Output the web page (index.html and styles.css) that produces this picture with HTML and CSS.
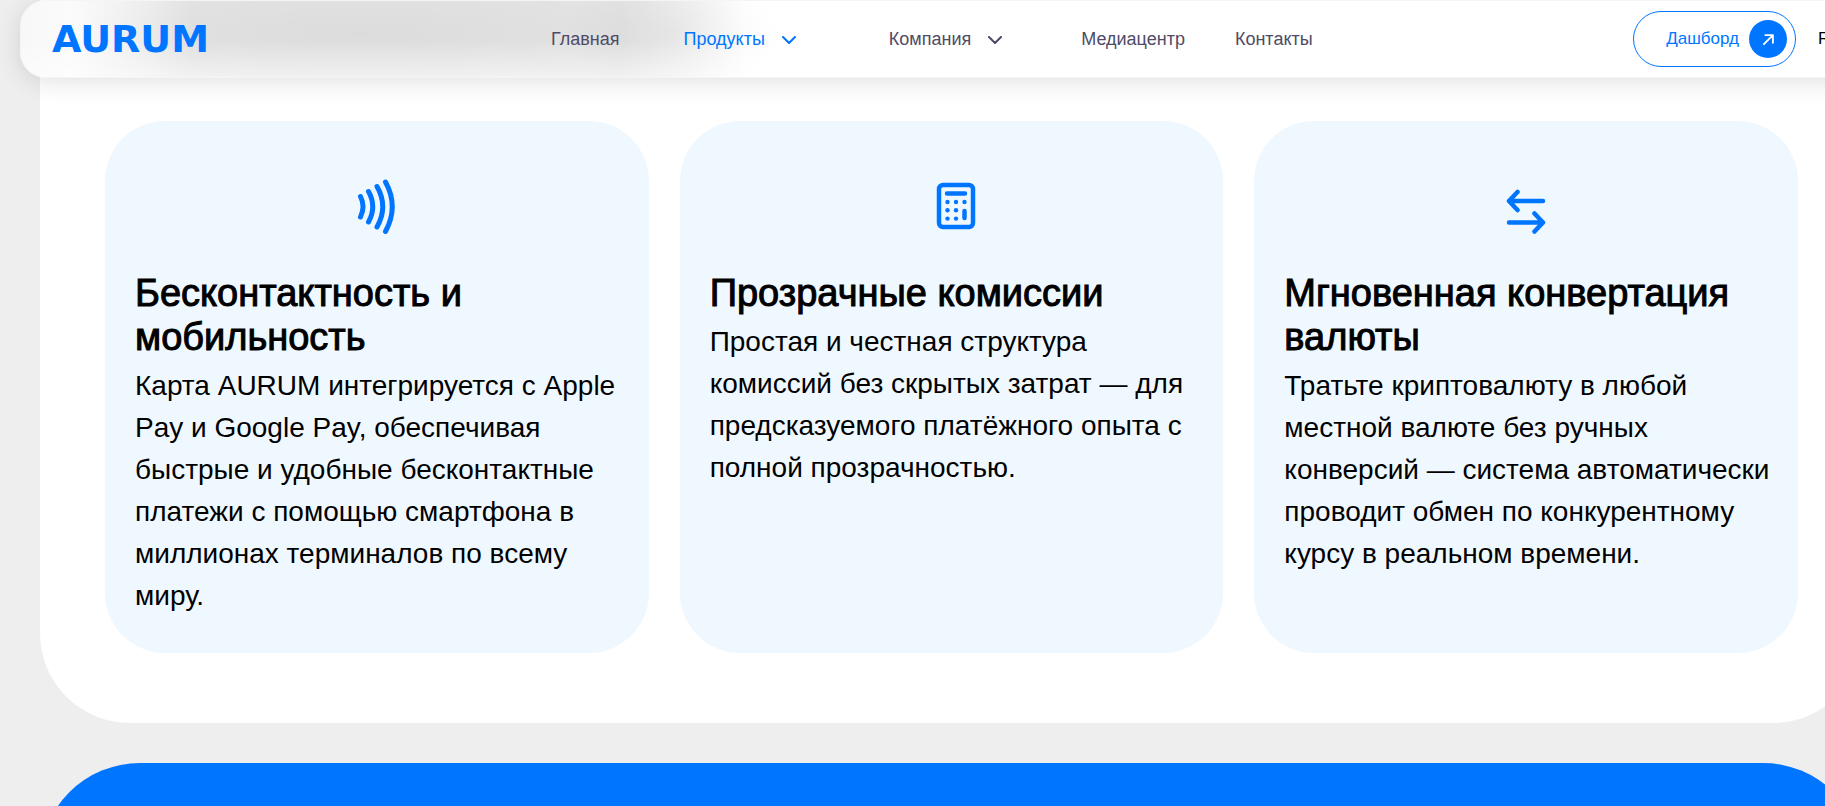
FILE: index.html
```html
<!DOCTYPE html>
<html lang="ru">
<head>
  <meta charset="UTF-8">
  <meta name="viewport" content="width=device-width, initial-scale=1.0">
  <title>AURUM</title>
  <link rel="stylesheet" href="styles.css">
</head>
<body>
  <header class="header">
    <a href="#" class="logo">AURUM</a>
    <nav class="nav">
      <a href="#" class="nav-link">Главная</a>
      <a href="#" class="nav-link has-menu active">Продукты
        <svg class="chevron" viewBox="0 0 14 8"><path d="M1 1l6 6 6-6"/></svg>
      </a>
      <a href="#" class="nav-link has-menu">Компания
        <svg class="chevron" viewBox="0 0 14 8"><path d="M1 1l6 6 6-6"/></svg>
      </a>
      <a href="#" class="nav-link">Медиацентр</a>
      <a href="#" class="nav-link">Контакты</a>
    </nav>
    <div class="header-right">
      <a href="#" class="dashboard">Дашборд
        <span class="dashboard-icon">
          <svg viewBox="0 0 12 12"><path d="M1 11L10.500 1.500M2.500 1.200h8.300v8.300"/></svg>
        </span>
      </a>
      <a href="#" class="lang">RU</a>
    </div>
  </header>

  <main class="page">
    <section class="features">
      <div class="card">
        <svg class="card-icon contactless" viewBox="0 0 60 60">
          <path d="M13.500 20.500q5 10 0 20.500M21.500 15.500q8.500 15 0 30.500M30 10.500q11.500 20 0 40.500M38.500 6q13.500 24.500 0 49.500"/>
        </svg>
        <h3>Бесконтактность и мобильность</h3>
        <p>Карта AURUM интегрируется с Apple Pay и Google Pay, обеспечивая быстрые и удобные бесконтактные платежи с помощью смартфона в миллионах терминалов по всему миру.</p>
      </div>
      <div class="card">
        <svg class="card-icon" viewBox="0 0 60 60">
          <rect x="18" y="9" width="34" height="42" rx="4"/>
          <path d="M26 17.500h18M43.500 35v7"/>
          <g class="dots">
            <circle cx="26.500" cy="26" r="2.200"/>
            <circle cx="35" cy="26" r="2.200"/>
            <circle cx="43.500" cy="26" r="2.200"/>
            <circle cx="26.500" cy="34.300" r="2.200"/>
            <circle cx="35" cy="34.300" r="2.200"/>
            <circle cx="26.500" cy="42.600" r="2.200"/>
            <circle cx="35" cy="42.600" r="2.200"/>
          </g>
        </svg>
        <h3>Прозрачные комиссии</h3>
        <p>Простая и честная структура комиссий без скрытых затрат — для предсказуемого платёжного опыта с полной прозрачностью.</p>
      </div>
      <div class="card">
        <svg class="card-icon" viewBox="0 0 60 60">
          <path d="M47 25H13M21.500 16L13 25l8.500 9M13 46.500h34M38.500 37.500l8.500 9-8.500 9"/>
        </svg>
        <h3>Мгновенная конвертация валюты</h3>
        <p>Тратьте криптовалюту в любой местной валюте без ручных конверсий — система автоматически проводит обмен по конкурентному курсу в реальном времени.</p>
      </div>
    </section>
    <section class="banner"></section>
  </main>
</body>
</html>
```
FILE: styles.css
```css
* {
  box-sizing: border-box;
}
html {
  overflow: hidden;
}
body {
  margin: 0;
  min-width: 1903px;
  background: #eee;
  color: #000;
  font-family: 'Liberation Sans', Arial, sans-serif;
}
a {
  color: inherit;
  text-decoration: none;
}
svg {
  fill: none;
  stroke: currentColor;
  stroke-linecap: round;
  stroke-linejoin: round;
}

/* header */
.header {
  position: sticky;
  top: 0;
  z-index: 10;
  display: flex;
  align-items: center;
  height: 78px;
  margin: 0 20px;
  padding: 0 31px;
  border: 1px solid #f5f5f5;
  border-radius: 26px;
  background:
    linear-gradient(to bottom, transparent 40px, rgba(255,255,255,0.5)),
    radial-gradient(ellipse 110px 60px at 650px 32px, rgba(0,0,0,0.04), transparent),
    radial-gradient(ellipse 300px 50px at 340px 32px, rgba(0,0,0,0.03), transparent),
    linear-gradient(to right, transparent 50px, rgba(0,0,0,0.11) 170px, rgba(0,0,0,0.11) 600px, transparent 725px),
    linear-gradient(to right, #f8f8f8, #fff 130px);
  box-shadow: 0 4px 24px rgba(0,0,0,0.12);
}
.logo {
  width: 164px;
  color: #0075ff;
  font-family: 'DejaVu Sans', sans-serif;
  font-size: 38px;
  font-weight: bold;
  line-height: 40px;
}
.nav {
  display: flex;
  gap: 50px;
  margin-left: 335px;
  color: #4f4b66;
  font-size: 18px;
}
.nav-link {
  display: flex;
  align-items: center;
}
.has-menu {
  gap: 17px;
  padding: 0 29px 0 14px;
}
.active {
  color: #0075ff;
}
.chevron {
  width: 14px;
  height: 8px;
  margin-top: 2px;
  stroke-width: 2;
}
.header-right {
  display: flex;
  align-items: center;
  gap: 22px;
  margin-left: auto;
}
.dashboard {
  display: flex;
  align-items: center;
  gap: 10px;
  height: 56px;
  padding: 0 8px 0 32px;
  border: 1px solid #0075ff;
  border-radius: 28px;
  color: #0075ff;
  font-size: 17px;
}
.dashboard-icon {
  display: flex;
  align-items: center;
  justify-content: center;
  width: 38px;
  height: 38px;
  border-radius: 50%;
  background: #0075ff;
  color: #fff;
}
.dashboard-icon svg {
  width: 11px;
  height: 11px;
  stroke-width: 2;
}
.lang {
  width: 33px;
  font-size: 17px;
}

/* cards */
.page {
  margin: -78px 40px 0;
}
.features {
  display: grid;
  grid-template-columns: repeat(3, 1fr);
  gap: 31px;
  padding: 121px 65px 70px;
  border-radius: 0 0 90px 90px;
  background: #fff;
}
.card {
  padding: 55px 20px 36px 30px;
  border-radius: 60px;
  background: #f0f8ff;
}
.card-icon {
  display: block;
  width: 70px;
  height: 60px;
  margin: 0 auto 35px;
  padding-right: 10px;
  color: #0075ff;
  stroke-width: 4.5;
}
.contactless {
  stroke-width: 5;
}
.dots {
  fill: currentColor;
  stroke: none;
}
.card h3 {
  margin: 0 0 6px;
  font-size: 38px;
  font-weight: normal;
  line-height: 44px;
  -webkit-text-stroke: 1px #000;
}
.card p {
  margin: 0;
  font-size: 28px;
  line-height: 42px;
}

.banner {
  height: 400px;
  margin-top: 40px;
  border-radius: 100px;
  background: #0075ff;
}
```
